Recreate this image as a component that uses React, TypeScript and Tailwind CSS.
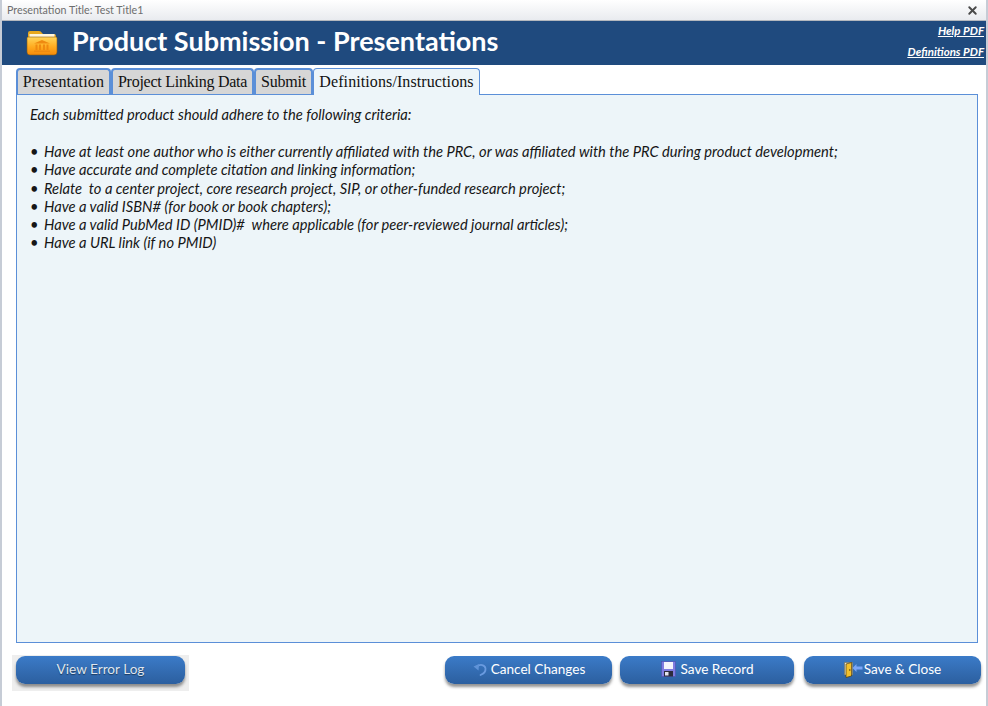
import { X } from 'lucide-react';

const criteria = [
  'Have at least one author who is either currently affiliated with the PRC, or was affiliated with the PRC during product development;',
  'Have accurate and complete citation and linking information;',
  'Relate  to a center project, core research project, SIP, or other-funded research project;',
  'Have a valid ISBN# (for book or book chapters);',
  'Have a valid PubMed ID (PMID)#  where applicable (for peer-reviewed journal articles);',
  'Have a URL link (if no PMID)',
];

const tabs = [
  { label: 'Presentation', width: 'w-[95px]', text: 'tracking-[0.2px]' },
  { label: 'Project Linking Data', width: 'w-[143px]', text: 'tracking-[-0.25px]' },
  { label: 'Submit', width: 'w-[59px]', text: 'tracking-[-0.2px]' },
];

const btn =
  "h-[28px] pb-[2px] rounded-[9px] bg-gradient-to-b from-[#3b7bc8] to-[#2c5f9f] shadow-[0_3px_3px_rgba(60,60,60,0.55)] flex items-center justify-center text-[13.6px] font-['Lato',sans-serif]";

const FolderIcon = () => (
  <svg width="32" height="26" viewBox="0 0 32 26" className="shrink-0">
    <defs>
      <linearGradient id="folderFace" x1="0" y1="0" x2="0" y2="1">
        <stop offset="0" stopColor="#ffd65a" />
        <stop offset="0.55" stopColor="#ffab1f" />
        <stop offset="1" stopColor="#f58a0a" />
      </linearGradient>
    </defs>
    <path d="M2 3 q0-2 2-2 h9 q2 0 3 2 l1 1 h11 q2 0 2 2 v4 H2z" fill="#e8a91e" />
    <rect x="3.5" y="4" width="25" height="4" fill="#fff6da" />
    <path d="M1 8 q0-1 1-1 h28 q1 0 1 1 v14 q0 3-3 3 H4 q-3 0-3-3z" fill="url(#folderFace)" stroke="#8a5a10" strokeWidth="0.6" />
    <path d="M16 10 l8 3.500 H8z" fill="#ef8a10" />
    <path d="M9.500 14.500h2v5.500h-2zM13 14.500h2v5.500h-2zM17 14.500h2v5.500h-2zM20.500 14.500h2v5.500h-2zM8 20.500h16v1.500H8z" fill="#ef8a10" />
  </svg>
);

const UndoIcon = () => (
  <svg width="16" height="16" viewBox="0 0 16 16" className="shrink-0">
    <path d="M5 5.500 C8 3 13 3.500 13.500 7.500 C13.800 10.500 11 13 8.500 14" fill="none" stroke="#6a9be0" strokeWidth="1.800" strokeLinecap="round" />
    <path d="M1.500 5.500 L7 3 L6.500 9.500z" fill="#5f93d8" />
  </svg>
);

const SaveIcon = () => (
  <svg width="15" height="16" viewBox="0 0 15 16" className="shrink-0">
    <rect x="0.500" y="0.500" width="14" height="15" fill="#7f7ce0" stroke="#4a48a8" strokeWidth="0.500" />
    <rect x="3" y="1" width="9" height="7" fill="#f4f4fb" />
    <rect x="3" y="10" width="9" height="5.500" fill="#2c2c3c" />
    <rect x="4" y="11" width="3.500" height="3.500" fill="#e4e4ee" />
  </svg>
);

const DoorIcon = () => (
  <svg width="19" height="17" viewBox="0 0 19 17" className="shrink-0">
    <path d="M0.500 1.500h8v12.500h-8z" fill="#efe6c8" stroke="#6e6238" strokeWidth="0.500" />
    <path d="M2 3l5.500-1.500v13.500l-5.500 1.500z" fill="#f2c02c" stroke="#4c3a10" strokeWidth="0.700" />
    <circle cx="5.800" cy="9" r="0.700" fill="#3c2c08" />
    <path d="M8.500 7l4-4v2.500h6v3h-6v2.500z" fill="#7ba6f8" />
  </svg>
);

export default function App() {
  return (
    <div className="w-[988px] h-[706px] bg-white flex flex-col overflow-hidden border-l-2 border-r-2 border-[#c6ccd6] font-['Lato',sans-serif]">
      {/* title bar */}
      <div className="h-[21px] shrink-0 flex items-center justify-between pl-[5px] pr-[7px] bg-gradient-to-b from-white to-[#e9ebef] border-b border-[#b4b8be]">
        <span className="text-[10.7px] text-[#6d6d6d]">Presentation Title: Test Title1</span>
        <X size={13} strokeWidth={3.500} className="text-[#4a4a4a]" />
      </div>

      {/* header */}
      <div className="h-[44px] shrink-0 bg-[#1f4a7e] flex justify-between pl-[24px] pr-[2px]">
        <div className="flex items-center gap-[14px]">
          <FolderIcon />
          <h1 className="text-[27px] font-bold text-white font-['Lato',sans-serif] -mt-[3px]">Product Submission - Presentations</h1>
        </div>
        <div className="flex flex-col items-end pt-[1px] gap-[4px] text-[11.500px] font-bold italic text-white underline leading-[17px]">
          <a>Help PDF</a>
          <a>Definitions PDF</a>
        </div>
      </div>

      {/* tabs */}
      <div className="flex pl-[14px] pt-[3px] font-['Liberation_Serif',serif] text-[16px] text-[#111]">
        {tabs.map((tab) => (
          <div
            key={tab.label}
            className={`${tab.width} ${tab.text} h-[26px] flex items-center justify-center bg-[#d6d6d6] border-2 border-b-0 border-[#5b8fd8] rounded-t-[4px]`}
          >
            {tab.label}
          </div>
        ))}
        <div className="w-[167px] h-[27px] -mb-px z-10 flex items-center justify-center bg-[#edf5f9] border border-b-0 border-[#5b8fd8] rounded-t-[4px] tracking-[0.1px]">
          Definitions/Instructions
        </div>
      </div>

      {/* panel */}
      <div className="ml-[14px] w-[962px] h-[549px] bg-[#edf5f9] border border-[#5b8fd8] pl-[13px] pt-[10px] text-[14.7px] italic text-[#161616] leading-[18.200px]">
        <p>Each submitted product should adhere to the following criteria:</p>
        <ul className="mt-[19px]">
          {criteria.map((item) => (
            <li key={item} className="flex whitespace-pre">
              <span className="w-[14px] not-italic">•</span>
              {item}
            </li>
          ))}
        </ul>
      </div>

      {/* footer */}
      <div className="flex-1 flex items-start justify-between pl-[10px] pr-[5px] pt-[12px]">
        <div className="w-[177px] h-[36px] bg-[#eeeeee] px-[4px] pt-[1px]">
          <button className={`${btn} w-[169px] text-[#dfe6ef] [text-shadow:0_1px_1px_rgba(0,0,0,0.45)]`}>View Error Log</button>
        </div>
        <div className="flex pt-[1px]">
          <button className={`${btn} w-[167px] gap-[3px] text-white`}>
            <UndoIcon />
            Cancel Changes
          </button>
          <button className={`${btn} w-[174px] gap-[5px] ml-[8px] text-white`}>
            <SaveIcon />
            Save Record
          </button>
          <button className={`${btn} w-[177px] gap-[1px] ml-[10px] text-white`}>
            <DoorIcon />
            Save &amp; Close
          </button>
        </div>
      </div>
    </div>
  );
}
